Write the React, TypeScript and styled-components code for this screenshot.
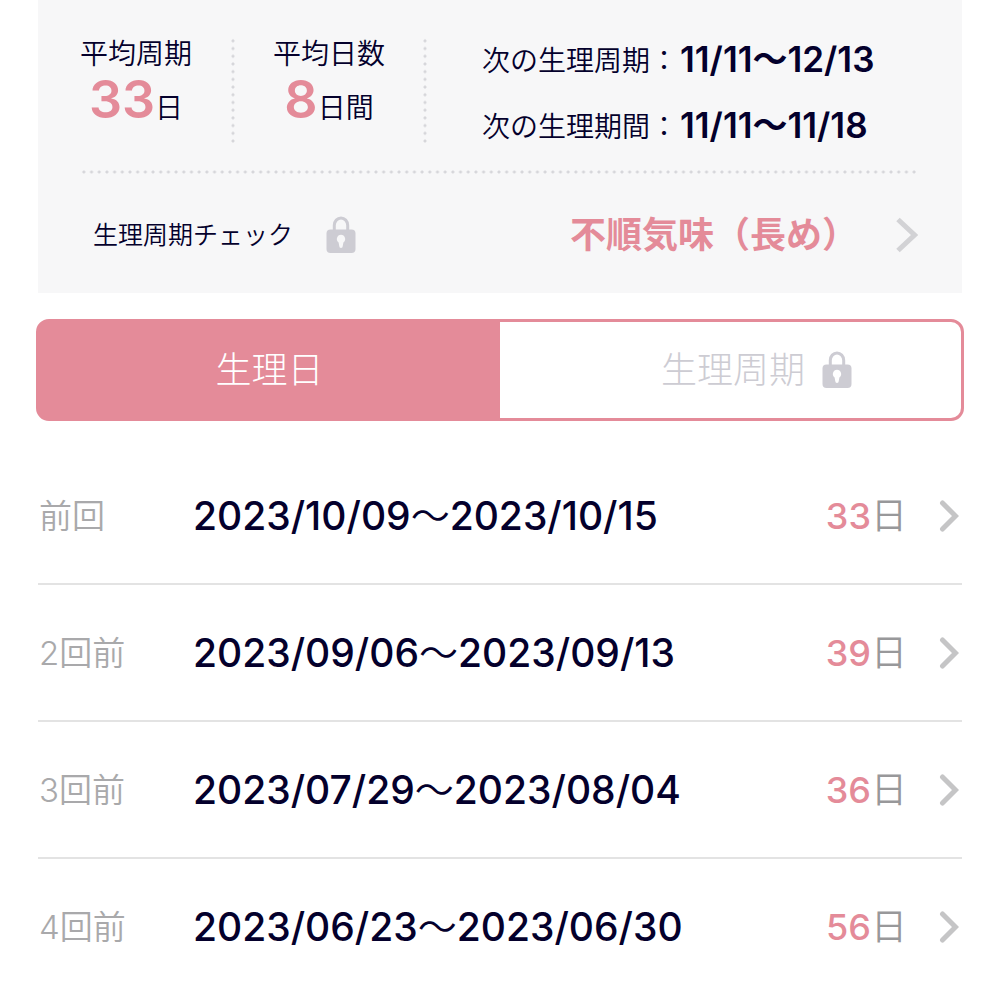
import React, { useState } from "react";
import styled, { createGlobalStyle } from "styled-components";

const ink = "#04002c";
const pink = "#e48b99";
const lockGrey = "#cdccd3";
const light = 350;

const GlobalStyle = createGlobalStyle`
  * { box-sizing: border-box; }
  body {
    margin: 0;
    background: #fff;
    color: ${ink};
    font-family: Inter, "Noto Sans CJK JP", sans-serif;
  }
  button {
    font: inherit;
    color: inherit;
    background: none;
    border: 0;
    padding: 0;
    cursor: pointer;
  }
`;

const Page = styled.main`
  padding: 0 36px;
`;

const Summary = styled.section`
  margin: 0 2px;
  padding: 0 44px 0 42px;
  background: #f7f7f8;
`;

const Stats = styled.div`
  display: flex;
  align-items: flex-start;
  height: 170px;
  padding-top: 37px;
`;

const Stat = styled.div`
  width: 151px;
  flex: none;
`;

const NextStat = styled(Stat)`
  width: 188px;
  padding-left: 38px;
`;

const StatLabel = styled.div`
  font-size: 28px;
  line-height: 34px;
  font-weight: ${light};
  white-space: nowrap;
`;

const StatValue = styled.div`
  width: 112px;
  line-height: 58px;
  font-size: 28px;
  font-weight: ${light};
  text-align: center;
  white-space: nowrap;
`;

const Big = styled.span`
  color: ${pink};
  font-size: 52px;
  font-weight: 600;
`;

const dots = "radial-gradient(circle, #d6d6da 1px, transparent 2px)";

const VerticalDots = styled.div`
  flex: none;
  width: 4px;
  height: 108px;
  background: ${dots} 0 0 / 4px calc(100% / 14);
`;

const HorizontalDots = styled.div`
  height: 4px;
  background: ${dots} 0 0 / calc(100% / 109) 4px;
`;

const NextDates = styled.dl`
  margin: 0 0 0 55px;
  display: grid;
  grid-template-columns: auto auto;
  grid-auto-rows: 66px;
  white-space: nowrap;
`;

const NextLabel = styled.dt`
  font-size: 28px;
  line-height: 48px;
  font-weight: ${light};
`;

const NextValue = styled.dd`
  margin: 0 0 0 2px;
  font-size: 35px;
  line-height: 44px;
  font-weight: 600;
`;

const CheckRow = styled.button`
  display: flex;
  align-items: center;
  width: 100%;
  height: 119px;
  padding: 2px 0 0 13px;
  text-align: left;
`;

const CheckLabel = styled.span`
  font-size: 25px;
  line-height: 36px;
  font-weight: ${light};
  margin-right: 33px;
`;

const CheckResult = styled.span`
  margin-left: auto;
  margin-right: 38px;
  color: ${pink};
  font-size: 36px;
  line-height: 48px;
  font-weight: 700;
`;

const Tabs = styled.div<{ $first: boolean }>`
  display: grid;
  grid-template-columns: 1fr 1fr;
  margin-top: 26px;
  height: 102px;
  border: 3px solid ${pink};
  border-radius: 13px;
  background: linear-gradient(to ${(p) => (p.$first ? "right" : "left")}, ${pink} 50%, #fff 50%);
`;

const Tab = styled.button<{ $active: boolean; $locked?: boolean }>`
  display: flex;
  align-items: center;
  justify-content: center;
  gap: 17px;
  padding-left: ${(p) => (p.$locked ? "52px" : "0")};
  font-size: 36px;
  line-height: 48px;
  font-weight: 300;
  color: ${(p) => (p.$active ? "#fff" : lockGrey)};
`;

const History = styled.ul`
  list-style: none;
  margin: 27px 2px 0;
  padding: 0;
`;

const HistoryItem = styled.li`
  border-bottom: 2px solid #e3e3e3;
  &:last-child { border-bottom: 0; }
`;

const HistoryButton = styled.button`
  display: flex;
  align-items: center;
  width: 100%;
  height: 135px;
  padding: 0 3px 0 1px;
  line-height: 48px;
  text-align: left;
  white-space: nowrap;
`;

const Ago = styled.span`
  width: 154px;
  font-size: 33px;
  font-weight: ${light};
  color: #a9a9ab;
`;

const Range = styled.span`
  font-size: 39px;
  font-weight: 500;
`;

const Tilde = styled.span`
  font-weight: ${light};
`;

const Days = styled.span`
  margin-left: auto;
  margin-right: 32px;
  font-size: 36px;
  font-weight: ${light};
  color: #98989a;
`;

const DayCount = styled.span`
  font-weight: 500;
  color: ${pink};
`;

const Lock = ({ hole }: { hole: string }) => (
  <svg width="30" height="38" viewBox="0 0 30 38" aria-hidden="true">
    <path d="M8.3 15V9.3a6.7 7.3 0 0 1 13.4 0V15" fill="none" stroke={lockGrey} strokeWidth="3" />
    <rect x="0.5" y="13.5" width="29" height="23.5" rx="4" fill={lockGrey} />
    <path d="M15 18.8a4.2 4.2 0 0 0-2.4 7.6l.7 3.8a1.7 1.7 0 0 0 3.4 0l.7-3.8A4.2 4.2 0 0 0 15 18.8z" fill={hole} />
  </svg>
);

const CheckChevron = () => (
  <svg width="22" height="36" viewBox="0 0 22 36" aria-hidden="true">
    <path d="M2 2.5 18.5 18 2 33.5" fill="none" stroke="#d2d2d5" strokeWidth="5" />
  </svg>
);

const RowChevron = () => (
  <svg width="20" height="32" viewBox="0 0 20 32" aria-hidden="true">
    <path d="M3.5 3 16.5 16 3.5 29" fill="none" stroke="#c5c5c6" strokeWidth="5" strokeLinecap="round" />
  </svg>
);

const history = [
  { ago: "前回", from: "2023/10/09", to: "2023/10/15", days: 33 },
  { ago: "2回前", from: "2023/09/06", to: "2023/09/13", days: 39 },
  { ago: "3回前", from: "2023/07/29", to: "2023/08/04", days: 36 },
  { ago: "4回前", from: "2023/06/23", to: "2023/06/30", days: 56 },
];

export default function App() {
  const [tab, setTab] = useState<"days" | "cycle">("days");

  return (
    <Page lang="ja">
      <GlobalStyle />
      <Summary>
        <Stats>
          <Stat>
            <StatLabel>平均周期</StatLabel>
            <StatValue><Big>33</Big>日</StatValue>
          </Stat>
          <VerticalDots />
          <NextStat>
            <StatLabel>平均日数</StatLabel>
            <StatValue><Big>8</Big>日間</StatValue>
          </NextStat>
          <VerticalDots />
          <NextDates>
            <NextLabel>次の生理周期：</NextLabel>
            <NextValue>11/11〜12/13</NextValue>
            <NextLabel>次の生理期間：</NextLabel>
            <NextValue>11/11〜11/18</NextValue>
          </NextDates>
        </Stats>
        <HorizontalDots />
        <CheckRow type="button">
          <CheckLabel>生理周期チェック</CheckLabel>
          <Lock hole="#f7f7f8" />
          <CheckResult>不順気味（長め）</CheckResult>
          <CheckChevron />
        </CheckRow>
      </Summary>
      <Tabs role="tablist" $first={tab === "days"}>
        <Tab type="button" role="tab" aria-selected={tab === "days"} $active={tab === "days"} onClick={() => setTab("days")}>
          生理日
        </Tab>
        <Tab type="button" role="tab" aria-selected={tab === "cycle"} $active={tab === "cycle"} $locked onClick={() => setTab("cycle")}>
          生理周期
          <Lock hole={tab === "cycle" ? pink : "#fff"} />
        </Tab>
      </Tabs>
      <History>
        {history.map((h) => (
          <HistoryItem key={h.ago}>
            <HistoryButton type="button">
              <Ago>{h.ago}</Ago>
              <Range>{h.from}<Tilde>〜</Tilde>{h.to}</Range>
              <Days><DayCount>{h.days}</DayCount>日</Days>
              <RowChevron />
            </HistoryButton>
          </HistoryItem>
        ))}
      </History>
    </Page>
  );
}
